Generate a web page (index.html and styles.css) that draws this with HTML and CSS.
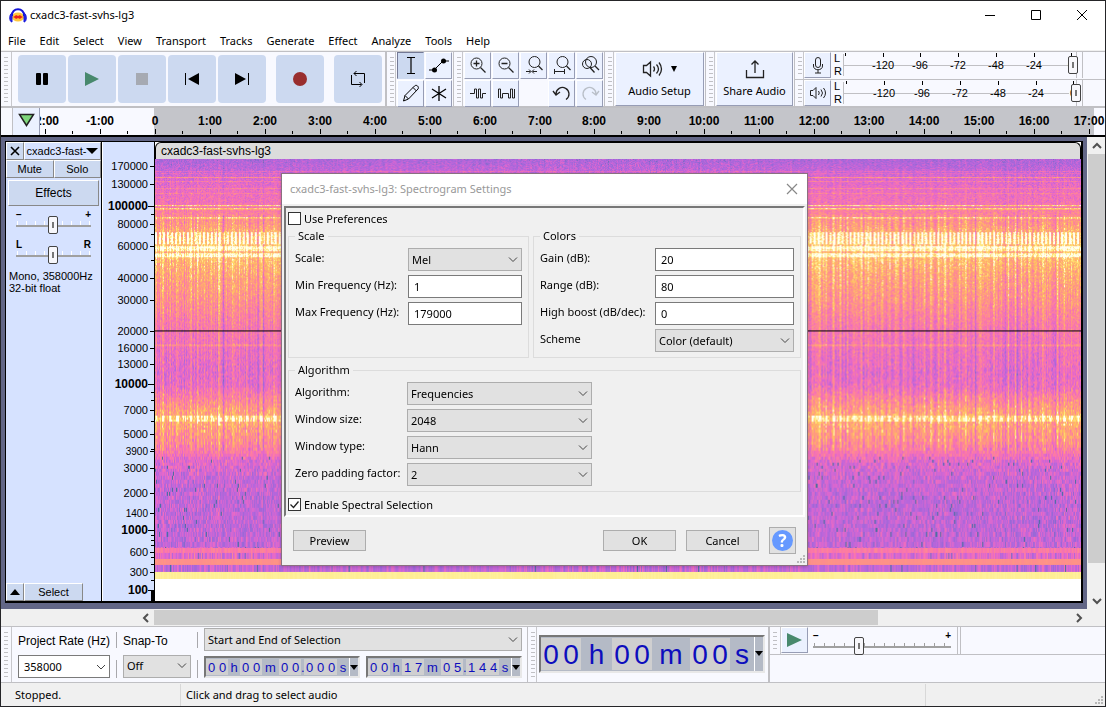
FILE: index.html
```html
<!DOCTYPE html>
<html lang="en">
<head>
<meta charset="utf-8">
<title>cxadc3-fast-svhs-lg3</title>
<link rel="stylesheet" href="styles.css">
</head>
<body>
<div class="window">
  <header class="titlebar">
    <svg class="logo" width="18" height="16" viewBox="0 0 18 16"><ellipse cx="9" cy="10" rx="6" ry="4.500" fill="#ffc53a"/><path d="M4 10l2-1 1-1 2 1 2-1 1 1 2 1-2 1-1 1-2-1-2 1-1-1z" fill="#e8201c"/><path d="M3 9C2 0 16 0 15 9" fill="none" stroke="#1414d8" stroke-width="2"/><path d="M3 6v9C0 15 0 7 3 6zM15 6v9c3 0 3-8 0-9z" fill="#2626e8" stroke="#1414d8"/></svg>
    <h1 class="title">cxadc3-fast-svhs-lg3</h1>
    <div class="winbtns">
      <button aria-label="Minimize"><svg width="12" height="12"><path d="M1 6.500h10" stroke="#000"/></svg></button>
      <button aria-label="Maximize"><svg width="12" height="12"><path d="M1.500 1.500h9v9h-9z" fill="none" stroke="#000"/></svg></button>
      <button aria-label="Close"><svg width="12" height="12"><path d="M1 1l10 10M11 1L1 11" stroke="#000"/></svg></button>
    </div>
  </header>
  <nav class="menubar"><button>File</button><button>Edit</button><button>Select</button><button>View</button><button>Transport</button><button>Tracks</button><button>Generate</button><button>Effect</button><button>Analyze</button><button>Tools</button><button>Help</button></nav>

  <div class="toolbars">
    <div class="dock transport">
      <i class="grip"></i>
      <div class="tbtns">
        <button aria-label="Pause"><svg width="24" height="24"><rect x="6" y="6" width="5" height="12" rx="1"/><rect x="13" y="6" width="5" height="12" rx="1"/></svg></button>
        <button aria-label="Play"><svg width="24" height="24"><path d="M5 5l14 7-14 7z" fill="#48896d"/></svg></button>
        <button aria-label="Stop"><svg width="24" height="24"><path d="M6 6h12v12H6z" fill="#a6aab2"/></svg></button>
        <button aria-label="Skip to start"><svg width="24" height="24"><path d="M5.500 6v12" stroke="#000"/><path d="M19 6v12L8 12z"/></svg></button>
        <button aria-label="Skip to end"><svg width="24" height="24"><path d="M18.500 6v12" stroke="#000"/><path d="M5 6v12l11-6z"/></svg></button>
        <button class="rec" aria-label="Record"><svg width="24" height="24"><circle cx="12" cy="12" r="7" fill="#992e2e"/></svg></button>
        <button class="loop" aria-label="Loop"><svg width="24" height="24" fill="none" stroke="#000"><path d="M5.500 8v9.500h10M8 6.500h10.500V16M10.500 4L8 6.500 10.500 9M13.500 15l2.500 2.500-2.500 2.500"/></svg></button>
      </div>
    </div>
    <div class="dock">
      <i class="grip"></i>
      <div class="tools two">
        <button class="on" aria-label="Selection tool"><svg width="24" height="24" fill="none" stroke="#000"><path d="M8 4.500h8M8 20.500h8M12 5v15" stroke-width="1.200"/></svg></button>
        <button aria-label="Envelope tool"><svg width="24" height="24"><path d="M2 17h5l9-9h6" fill="none" stroke="#000"/><circle cx="7.500" cy="17" r="2.500"/><circle cx="16.500" cy="8" r="2.500"/></svg></button>
        <button aria-label="Draw tool"><svg width="24" height="24" fill="none" stroke="#000"><path d="M4.500 20l1.500-5.500L15.500 5c2-2 5 1 3.500 3L9.500 18zM14 6.500l3.500 3.500M6 14.500l3.500 3.500"/></svg></button>
        <button aria-label="Multi-tool"><svg width="24" height="24" stroke="#000"><path d="M12 5v15M5 8l14 9M19 8L5 17" stroke-width="1.300"/></svg></button>
      </div>
    </div>
    <div class="dock">
      <i class="grip"></i>
      <div class="tools five">
        <button aria-label="Zoom in"><svg width="24" height="24" fill="none" stroke="#222"><circle cx="10.500" cy="10.500" r="5.500"/><path d="M14.500 14.500l5 5M10.500 7.500v6M7.500 10.500h6" stroke-width="1.300"/></svg></button>
        <button aria-label="Zoom out"><svg width="24" height="24" fill="none" stroke="#222"><circle cx="10.500" cy="10.500" r="5.500"/><path d="M14.500 14.500l5 5M7.500 10.500h6" stroke-width="1.300"/></svg></button>
        <button aria-label="Fit selection to width"><svg width="24" height="24" fill="none" stroke="#222"><circle cx="12.500" cy="9" r="5.500"/><path d="M16.500 13l4 4" stroke-width="1.300"/><path d="M4 18.500h4.500M10.500 18.500H15M7 16.500l2 2-2 2M12 16.500l-2 2 2 2"/></svg></button>
        <button aria-label="Fit project to width"><svg width="24" height="24" fill="none" stroke="#222"><circle cx="12.500" cy="9" r="5.500"/><path d="M16.500 13l4 4" stroke-width="1.300"/><path d="M4.500 18.500h10M4.500 16v5M14.500 16v5"/></svg></button>
        <button aria-label="Zoom toggle"><svg width="24" height="24" fill="none" stroke="#222"><circle cx="13" cy="9" r="5.500"/><circle cx="9" cy="11" r="4.500"/><path d="M17 13l4 4M12 14.500l4.500 5" stroke-width="1.300"/></svg></button>
        <button aria-label="Trim audio"><svg width="24" height="24" fill="none" stroke="#222"><path d="M4 12.500h4.500v-4.500h2v9h2v-9h2v9h2v-4.500H20"/></svg></button>
        <button aria-label="Silence audio"><svg width="24" height="24" fill="none" stroke="#222"><path d="M4.500 17V8h2v9h2v-4.500h6V17h2V8h2v9h2V8"/></svg></button>
        <span></span>
        <button aria-label="Undo"><svg width="24" height="24" fill="none" stroke="#222" stroke-width="1.300"><path d="M6 13a6.500 6.500 0 1 1 10 5.500M3 10l3 4 4-3"/></svg></button>
        <button aria-label="Redo" disabled><svg width="24" height="24" fill="none" stroke="#b9bfc8" stroke-width="1.300"><path d="M18 13a6.500 6.500 0 1 0-10 5.500M21 10l-3 4-4-3"/></svg></button>
      </div>
    </div>
    <div class="dock">
      <i class="grip"></i>
      <button class="big setup"><span class="icons"><svg width="22" height="20" fill="none" stroke="#222" stroke-width="1.300"><path d="M1.500 6.500h3l4-3.500v14l-4-3.500h-3zM11.500 7.500q2 2.500 0 5M14.500 5.500q4 4.500 0 9M17 3.500q5 6.500 0 13"/></svg><svg width="6" height="6"><path d="M0 0h6L3 6z"/></svg></span>Audio Setup</button>
    </div>
    <div class="dock">
      <i class="grip"></i>
      <button class="big share"><svg width="20" height="20" fill="none" stroke="#222" stroke-width="1.300"><path d="M1.500 11v7.500h17V11M10 14V2M6.500 5.500L10 2l3.500 3.500"/></svg>Share Audio</button>
    </div>
    <div class="meters">
      <div class="meter">
        <i class="grip"></i>
        <button class="mbtn" aria-label="Record meter"><svg width="24" height="24" fill="none" stroke="#222"><rect x="9.500" y="4.500" width="5" height="10" rx="2.500"/><path d="M7.500 11v2c0 5 9 5 9 0v-2M12 17v3M9 20h6"/></svg></button>
        <span class="lr"><b>L</b><b>R</b></span>
        <div class="scale"><svg class="mscale" data-x="0" height="26"></svg><input type="range" class="vslider" aria-label="Recording level" value="98"></div>
      </div>
      <div class="meter">
        <i class="grip"></i>
        <button class="mbtn" aria-label="Playback meter"><svg width="24" height="24" fill="none" stroke="#222"><path d="M4.500 9.500h2.500l3-3v11l-3-3H4.500zM12.500 10q1.500 2 0 4M15 8.500q3 3.500 0 7M17.500 7q4 5 0 10"/></svg></button>
        <span class="lr"><b>L</b><b>R</b></span>
        <div class="scale"><svg class="mscale" data-x="1" height="26"></svg><input type="range" class="vslider" aria-label="Playback level" value="99"></div>
      </div>
    </div>
  </div>

  <div class="timeline">
    <button class="pin" aria-label="Timeline options"><svg width="18" height="14"><path d="M1.500 1.500h14L8.500 12.500z" fill="#7ed67b" stroke="#222" stroke-width="1.500"/></svg></button>
    <div class="ruler"><svg id="time" height="26"></svg></div>
  </div>

  <main class="project">
    <div class="tracks">
      <section class="track">
        <aside class="panel">
          <div class="prow"><button class="close" aria-label="Close track"><svg width="10" height="10"><path d="M1 1l8 8M9 1L1 9" stroke="#000" stroke-width="1.600"/></svg></button><button class="name">cxadc3-fast-<svg width="12" height="7"><path d="M0 0h12L6 6z"/></svg></button></div>
          <div class="prow half"><button>Mute</button><button>Solo</button></div>
          <button class="effects">Effects</button>
          <label class="gain"><span>−</span><span>+</span><input type="range" aria-label="Gain" value="49"></label>
          <label class="gain pan"><span>L</span><span>R</span><input type="range" aria-label="Pan" value="49"></label>
          <p class="info">Mono, 358000Hz<br>32-bit float</p>
          <div class="pfoot"><button class="fold" aria-label="Collapse"><svg width="10" height="6"><path d="M0 6h10L5 0z"/></svg></button><button class="sel">Select</button></div>
        </aside>
        <div class="freq"><svg id="freq" width="51" height="460"></svg></div>
        <div class="clip"><div class="cliphead">cxadc3-fast-svhs-lg3</div><canvas id="spec" width="928" height="441"></canvas></div>
      </section>
    </div>
    <div class="vbar"><button aria-label="Scroll up"><svg width="10" height="8"><path d="M1 6l4-4 4 4" fill="none" stroke="#505050" stroke-width="2"/></svg></button><i></i><button aria-label="Scroll down"><svg width="10" height="8"><path d="M1 2l4 4 4-4" fill="none" stroke="#505050" stroke-width="2"/></svg></button></div>
  </main>
  <div class="hbar"><button aria-label="Scroll left"><svg width="8" height="10"><path d="M6 1L2 5l4 4" fill="none" stroke="#505050" stroke-width="2"/></svg></button><div class="lane"><i></i></div><button aria-label="Scroll right"><svg width="8" height="10"><path d="M2 1l4 4-4 4" fill="none" stroke="#505050" stroke-width="2"/></svg></button></div>

  <div class="bottom">
    <div class="dock selbar">
      <i class="grip"></i>
      <div class="field rate"><label for="rate">Project Rate (Hz)</label><span class="combo"><input id="rate" value="358000"><svg width="10" height="6"><path d="M1 1l4 4 4-4" fill="none" stroke="#444"/></svg></span></div>
      <i class="rule"></i>
      <div class="field snap"><label for="snap">Snap-To</label><select id="snap"><option>Off</option></select></div>
      <i class="rule"></i>
      <div class="range">
        <select aria-label="Selection mode"><option>Start and End of Selection</option></select>
        <div class="times">
          <div class="time"><span class="d">0</span><span class="d">0</span><span class="h">h</span><span class="d">0</span><span class="d">0</span><span class="m">m</span><span class="d">0</span><span class="d">0</span><span class="p">.</span><span class="d">0</span><span class="d">0</span><span class="d">0</span><span class="s">s</span><button aria-label="Format"><svg width="8" height="5"><path d="M0 0h8L4 5z"/></svg></button></div>
          <div class="time"><span class="d">0</span><span class="d">0</span><span class="h">h</span><span class="d">1</span><span class="d">7</span><span class="m">m</span><span class="d">0</span><span class="d">5</span><span class="p">.</span><span class="d">1</span><span class="d">4</span><span class="d">4</span><span class="s">s</span><button aria-label="Format"><svg width="8" height="5"><path d="M0 0h8L4 5z"/></svg></button></div>
        </div>
      </div>
    </div>
    <div class="dock timebar">
      <i class="grip"></i>
      <div class="time large"><span class="d">0</span><span class="d">0</span><span class="h">h</span><span class="d">0</span><span class="d">0</span><span class="m">m</span><span class="d">0</span><span class="d">0</span><span class="s">s</span><button aria-label="Format"><svg width="8" height="5"><path d="M0 0h8L4 5z"/></svg></button></div>
    </div>
    <div class="rest">
      <div class="speed">
        <i class="grip"></i>
        <button class="mbtn" aria-label="Play at speed"><svg width="24" height="24"><path d="M4 5l15 7-15 7z" fill="#48896d"/></svg></button>
        <label class="gain"><span>−</span><span>+</span><input type="range" aria-label="Playback speed" value="32"></label>
        <i class="edge"></i>
      </div>
    </div>
  </div>
  <footer class="status"><span class="st1">Stopped.</span><span class="st2">Click and drag to select audio</span><span class="st3"><svg class="sizer" width="10" height="10" fill="#b8b8b8"><path d="M6 0h2v2H6zM3 3h2v2H3zM6 3h2v2H6zM0 6h2v2H0zM3 6h2v2H3zM6 6h2v2H6z"/></svg></span></footer>

  <form class="dialog" role="dialog" aria-label="Spectrogram Settings">
    <header class="dtitle"><h2>cxadc3-fast-svhs-lg3: Spectrogram Settings</h2><button type="button" aria-label="Close"><svg width="12" height="12"><path d="M1 1l10 10M11 1L1 11" stroke="#888" stroke-width="1.200"/></svg></button></header>
    <div class="dpanel">
      <label class="check"><input type="checkbox">Use Preferences</label>
      <div class="groups">
        <fieldset class="g-scale"><legend>Scale</legend>
          <label for="scale">Scale:</label><select id="scale"><option>Mel</option></select>
          <label for="minf">Min Frequency (Hz):</label><input id="minf" value="1">
          <label for="maxf">Max Frequency (Hz):</label><input id="maxf" value="179000">
        </fieldset>
        <fieldset class="g-colors"><legend>Colors</legend>
          <label for="cgain">Gain (dB):</label><input id="cgain" value="20">
          <label for="crange">Range (dB):</label><input id="crange" value="80">
          <label for="boost">High boost (dB/dec):</label><input id="boost" value="0">
          <label for="scheme">Scheme</label><select id="scheme"><option>Color (default)</option></select>
        </fieldset>
        <fieldset class="g-algo"><legend>Algorithm</legend>
          <label for="algo">Algorithm:</label><select id="algo"><option>Frequencies</option></select>
          <label for="wsize">Window size:</label><select id="wsize"><option>2048</option></select>
          <label for="wtype">Window type:</label><select id="wtype"><option>Hann</option></select>
          <label for="zpad">Zero padding factor:</label><select id="zpad"><option>2</option></select>
        </fieldset>
      </div>
      <label class="check spectral"><input type="checkbox" checked>Enable Spectral Selection</label>
    </div>
    <div class="dbtns"><button type="button">Preview</button><span class="grow"></span><button type="button">OK</button><button type="button">Cancel</button><button type="button" class="help" aria-label="Help"><span>?</span></button></div>
    <svg class="sizer" width="10" height="10" fill="#b8b8b8"><path d="M6 0h2v2H6zM3 3h2v2H3zM6 3h2v2H6zM0 6h2v2H0zM3 6h2v2H3zM6 6h2v2H6z"/></svg>
  </form>
</div>
<script src="app.js"></script>
</body>
</html>
```

FILE: styles.css
```css
* { box-sizing: border-box; }
body { margin: 0; font: 11px/16px "Noto Sans", "Open Sans", sans-serif; color: #000; }
button, input, select { font: inherit; color: inherit; margin: 0; }
button { border: 0; padding: 0; background: none; display: flex; align-items: center; justify-content: center; }
svg { display: block; flex: none; }
h1, h2, p { margin: 0; font: inherit; }

.window { position: relative; display: flex; flex-direction: column; height: 100vh; min-width: 1000px; border: 1px solid #252528; background: #f0f0f0; overflow: hidden; }
.titlebar { display: flex; align-items: center; height: 29px; background: #fff; padding: 0 0 1px 8px; }
.title { margin-left: 3px; flex: 1; }
.winbtns { display: flex; }
.winbtns button { width: 46px; height: 28px; }
.menubar { display: flex; height: 20px; background: #fff; padding: 1px 0 0 7px; gap: 14px; }
.menubar button { height: 20px; }

.toolbars { display: flex; height: 57px; margin-top: 1px; border-top: 1px solid #c0c0c4; border-bottom: 2px solid #c0c0c4; background: #f8f9ff; }
.dock { display: flex; align-items: center; border-right: 1px solid #c0c0c4; }
.transport { border-right-width: 2px; }
.grip { width: 9px; align-self: stretch; flex: none; border-right: 1px solid #c8c8cc; background: repeating-linear-gradient(#c0c0c4 0 1px, transparent 1px 4px) 3px 5px / 4px 46px no-repeat; }
.transport .grip, .selbar .grip, .speed .grip { width: 11px; }
.tbtns { display: flex; gap: 2px; padding: 0 3px 0 6px; }
.tbtns button { width: 48px; height: 48px; border-radius: 4px; background: #ccd9f0; }
.tbtns .rec { margin-left: 8px; }
.tbtns .loop { margin-left: 8px; }
.tools { display: grid; gap: 1px; padding: 0 1px; align-content: center; }
.two { grid-template-columns: repeat(2, 27px); }
.five { grid-template-columns: repeat(5, 27px); }
.tools button, .mbtn, .big { height: 27px; background: #ebf1ff; border: 1px solid #fff; border-right-color: #979db5; border-bottom-color: #979db5; }
.tools .on { background: #ccd9f0; border-color: #737995 #ccd9f0 #ccd9f0 #737995; }
.big { flex-direction: column; height: 54px; gap: 4px; margin: 0 1px; }
.setup { width: 89px; }
.setup .icons { display: flex; align-items: center; gap: 7px; }
.share { width: 77px; }
.meters { flex: 1; display: flex; flex-direction: column; }
.meter { display: flex; flex: 1; align-items: center; }
.meter + .meter { border-top: 1px solid #c0c0c4; }
.meter .grip, .speed .grip { background-size: 4px 17px; }
.mbtn { width: 27px; height: 26px; flex: none; }
.lr { width: 12px; padding-left: 3px; font: 11px/13px "Liberation Sans", sans-serif; }
.lr b { display: block; font-weight: 400; }
.scale { position: relative; width: 240px; overflow: hidden; border-right: 1px solid #c0c0c4; }
.mscale { width: 100%; font: 11px "Liberation Sans", sans-serif; }
.vslider { position: absolute; left: 0; top: 4px; width: 240px; }

input[type=range] { appearance: none; height: 18px; background: transparent; }
input[type=range]::-webkit-slider-thumb { appearance: none; width: 10px; height: 18px; border: 1px solid #444; border-radius: 2px; background: linear-gradient(#777, #777) center / 2px 6px no-repeat #f7f7fb; }

.timeline { display: flex; height: 29px; background: #f8f9ff; border-bottom: 2px solid #000; }
.pin { width: 28px; margin-left: 11px; height: 27px; background: #ebf1ff; border-right: 1px solid #979db5; border-left: 1px solid #c0c0c4; align-items: flex-start; padding: 5px 0 0 2px; }
.ruler { flex: 1; margin: 0 11px 0 0; overflow: visible; background: linear-gradient(#c4c5ca, #c4c5ca) 114px 0 no-repeat #f8f9ff; }
#time { width: 100%; overflow: visible; font: bold 12px "Liberation Sans", sans-serif; clip-path: inset(0 -11px 0 0); }

.project { flex: 1; min-height: 0; display: flex; }
.tracks { flex: 1; min-width: 0; background: #626686; padding: 4px 4px 6px 4px; display: flex; }
.track { flex: 1; min-width: 0; display: flex; border: 1px solid #000; border-width: 1px 2px 2px 1px; background: #d6e2ff; font: 11px/14px "Liberation Sans", sans-serif; }
.panel { width: 96px; flex: none; display: flex; flex-direction: column; border-right: 1px solid #000; }
.panel button { background: #ccd9f0; border: 1px solid #fff; border-right-color: #888; border-bottom-color: #888; }
.prow { display: flex; height: 18px; }
.prow .close { width: 18px; }
.prow .name { flex: 1; overflow: hidden; background: #d6e2ff; }
.half button { flex: 1; }
.panel .effects { height: 26px; margin: 2px 2px 4px 2px; font-size: 12px; }
.gain { display: grid; grid-template-columns: 1fr 1fr; grid-template-rows: 10px 18px; margin: 0 10px; height: 30px; font: bold 10px/10px "Liberation Sans", sans-serif; }
.gain span:nth-child(2) { text-align: right; }
.gain input { grid-column: 1 / 3; width: 100%; height: 18px; margin-top: -4px; background: linear-gradient(#a0a0a0, #a0a0a0) 0 9px / 100% 2px no-repeat, repeating-linear-gradient(90deg, #fff 0 1px, transparent 1px 9px) 1px 5px / 100% 4px no-repeat; }
.info { padding: 0 3px; line-height: 12px; white-space: nowrap; }
.pfoot { display: flex; height: 18px; margin-top: auto; }
.pfoot .fold { width: 18px; }
.pfoot .sel { width: 59px; }
.freq { width: 53px; flex: none; border-left: 1px solid #fff; border-right: 1px solid #000; overflow: hidden; }
#freq { font: 11px "Liberation Sans", sans-serif; }
.clip { flex: 1; min-width: 0; display: flex; flex-direction: column; background: #fff; }
.cliphead { height: 17px; flex: none; background: #dcdcdc; border: 1px solid #000; border-bottom: 0; border-radius: 6px 6px 0 0; padding-left: 5px; font-size: 12px; line-height: 17px; }
#spec { width: 100%; flex: 1; min-height: 0; display: block; }

.vbar { width: 18px; flex: none; display: flex; flex-direction: column; padding-left: 1px; }
.vbar button { height: 17px; }
.vbar i { flex: 1; background: #cdcdcd; margin-bottom: 29px; }
.hbar { display: flex; height: 17px; flex: none; padding: 1px 18px 1px 136px; }
.hbar button { width: 17px; }
.lane { flex: 1; display: flex; }
.lane i { width: 79%; background: #cdcdcd; }

.bottom { display: flex; height: 57px; flex: none; border-top: 1px solid #c0c0c4; border-bottom: 1px solid #c0c0c4; background: #f8f9ff; }
.selbar { gap: 6px; padding-right: 5px; }
.field { display: flex; flex-direction: column; gap: 5px; font: 12px/18px "Liberation Sans", sans-serif; white-space: nowrap; }
.rate { width: 92px; }
.snap { width: 68px; }
.combo { position: relative; display: block; }
.combo svg { position: absolute; right: 4px; top: 9px; }
.field select, .field input { font: 11px/16px "Noto Sans", "Open Sans", sans-serif; }
input:not([type]), select { width: 100%; height: 23px; border: 1px solid #7a7a7a; background: #fff; border-radius: 0; padding: 0 5px; outline: 0; min-width: 0; }
select { appearance: none; border-color: #adadad; padding: 0 3px; background: #e1e1e1 url("data:image/svg+xml,%3Csvg xmlns='http://www.w3.org/2000/svg' width='10' height='6'%3E%3Cpath d='M1 .5l4 4 4-4' fill='none' stroke='%23444'/%3E%3C/svg%3E") right 3px center no-repeat; }
.rule { width: 1px; height: 46px; background: linear-gradient(#a8a8ac 0 16px, transparent 16px 28px, #a8a8ac 28px); }
.range { width: 318px; display: flex; flex-direction: column; gap: 5px; padding-bottom: 3px; }
.times { display: flex; justify-content: space-between; }
.time { display: flex; height: 22px; padding: 1px 0; border: 2px solid #777; border-right-color: #e8e8e8; border-bottom-color: #e8e8e8; background: #b4bac6; color: #0d0dbd; font: 13px/17px "Liberation Sans", sans-serif; }
.time span { text-align: center; }
.time .d { width: 11px; background: #cfcfd0; }
.time .h { width: 12px; }
.time .m { width: 17px; }
.time .p { width: 3px; }
.time .s { width: 12px; }
.time button { width: 9px; margin: -1px 0; border-left: 1px solid #fff; }
.times .time { width: 156px; overflow: hidden; }
.large { width: 226px; height: 38px; margin: 0 3px 2px 2px; font-size: 28px; line-height: 34px; }
.large .d { width: 20px; }
.large .h { width: 31px; }
.large .m { width: 38px; }
.large .s { width: 24px; }
.timebar { border-right-width: 2px; }
.rest { flex: 1; min-width: 0; }
.speed { display: flex; height: 28px; border-bottom: 1px solid #c0c0c4; }
.speed .gain { width: 138px; margin: 4px 6px 0 5px; height: 24px; }
.speed .gain input { background: linear-gradient(#a0a0a0, #a0a0a0) 0 9px / 100% 2px no-repeat, repeating-linear-gradient(90deg, #a0a0a0 0 1px, transparent 1px 10px) 1px 6px / 100% 3px no-repeat; }
.edge { width: 4px; border: solid #c0c0c4; border-width: 0 1px; }

.status { display: flex; height: 23px; flex: none; line-height: 22px; padding-top: 1px; }
.st1 { width: 180px; padding-left: 14px; border-right: 1px solid #d8d8d8; }
.st2 { flex: 1; padding-left: 5px; border-right: 1px solid #d8d8d8; }
.st3 { width: 179px; }
.sizer { position: absolute; right: 0; bottom: 0; }

.dialog { position: absolute; left: 280px; top: 172px; width: 527px; border: 1px solid #8a7080; background: #f0f0f0; box-shadow: 0 1px 3px rgba(0, 0, 0, .2); padding-bottom: 11px; }
.dtitle { display: flex; align-items: center; justify-content: space-between; height: 30px; background: #fff; padding: 0 9px 0 8px; color: #999; }
.dpanel { margin: 2px 2px 10px; border: 2px solid #777; border-right-color: #fff; border-bottom-color: #fff; padding: 1px 2px 1px 2px; }
.check { display: flex; align-items: center; gap: 3px; height: 19px; }
.spectral { margin-top: 3px; }
.check input { appearance: none; width: 13px; height: 13px; border: 1px solid #333; background: #fff; }
.check input:checked { background: #fff url("data:image/svg+xml,%3Csvg xmlns='http://www.w3.org/2000/svg' width='11' height='11'%3E%3Cpath d='M1.500 5.500l3 3 5-6' fill='none' stroke='%23222' stroke-width='1.300'/%3E%3C/svg%3E") center no-repeat; }
.groups { display: grid; grid-template-columns: 241px 1fr; gap: 4px; }
fieldset { margin: 0; min-width: 0; border: 1px solid #dcdcdc; padding: 4px 6px 0; display: grid; grid-auto-rows: 23px; row-gap: 4px; line-height: 20px; height: 130px; align-content: start; white-space: nowrap; }
legend { padding: 0 3px; line-height: 16px; }
.g-scale { grid-template-columns: 113px 1fr; }
.g-colors { grid-template-columns: 115px 1fr; }
.g-algo { grid-column: 1 / 3; grid-template-columns: 112px 185px; }
.dbtns { display: flex; align-items: center; gap: 10px; padding: 0 11px; }
.dbtns button { width: 73px; height: 21px; border: 1px solid #adadad; background: #e1e1e1; }
.dbtns .help { width: 27px; height: 27px; }
.help span { width: 21px; height: 21px; border-radius: 50%; background: #6699ff; color: #fff; font: bold 17px/21px "Open Sans", sans-serif; }
.grow { flex: 1; }
```

FILE: app.js
```js
const NS = "http://www.w3.org/2000/svg";
function add(svg, tag, attrs, text) {
  const el = document.createElementNS(NS, tag);
  for (const k in attrs) el.setAttribute(k, attrs[k]);
  if (text !== undefined) el.textContent = text;
  svg.appendChild(el);
}
function tick(svg, x, y, w, h) { add(svg, "rect", { x, y, width: w, height: h }); }

// Timeline: one label per minute, a short tick on each half minute
const time = document.getElementById("time");
for (let m = -2; m <= 17; m++) {
  const x = Math.round(115 + m * 54.93);
  const label = m === 0 ? "0" : m + ":00";
  add(time, "text", { x, y: 17, "text-anchor": "middle" }, label);
  tick(time, x, 21, 1, 5);
  if (m < 17) tick(time, x + 27, 23, 1, 3);
}

// Level meters
for (const svg of document.querySelectorAll(".mscale")) {
  const dx = Number(svg.dataset.x);
  add(svg, "rect", { x: 0, y: 13, width: 226, height: 1, fill: "#c0c0c4" });
  add(svg, "rect", { x: 0, y: 2, width: 1, height: 22, fill: "#c0c0c4" });
  add(svg, "rect", { x: 233, y: 0, width: 1, height: 26, fill: "#c0c0c4" });
  ["", "-120", "-96", "-72", "-48", "-24", "0"].forEach((t, i) => {
    const x = Math.round(2 + i * (37.7 + dx * 0.2)) + dx;
    tick(svg, x, 1, 1, i ? 4 : 3);
    add(svg, "text", { x, y: 17, "text-anchor": "middle" }, t);
  });
}

// Frequency scale: [label, y, kind]
const freq = document.getElementById("freq");
[["170000", 24], ["130000", 42], ["100000", 64, "b"], ["80000", 82], ["60000", 104], ["40000", 136], ["30000", 158],
 ["20000", 189], ["16000", 206], ["13000", 222], ["10000", 242, "b"], ["7000", 268], ["5000", 292], ["3900", 309, "s"],
 ["3000", 326], ["2000", 351], ["1400", 371, "s"], ["1000", 388, "b"], ["600", 410], ["300", 430], ["100", 448, "b"]
].forEach(([t, y, k]) => {
  add(freq, "text", { x: 45, y: y + 4, "text-anchor": "end", "font-size": k === "b" ? 12 : k === "s" ? 10 : 11, "font-weight": k === "b" ? "bold" : "normal" }, t);
  tick(freq, k === "b" ? 45 : 47, y, k === "b" ? 6 : 4, 1);
});
[72, 92, 118, 250, 258, 279, 307, 393, 398, 403, 415, 422, 438].forEach(y => tick(freq, 48, y, 3, 1));
tick(freq, 48, 448, 3, 11);

// Spectrogram
const W = 928, H = 441;
const ctx = document.getElementById("spec").getContext("2d");
const img = ctx.createImageData(W, H);
let seed = 7;
function rnd() { seed = (seed * 1664525 + 1013904223) >>> 0; return seed / 4294967296; }
const palette = [[0, 50, 90, 110], [.12, 80, 110, 160], [.25, 150, 105, 215], [.38, 185, 102, 220], [.5, 228, 104, 204],
  [.62, 253, 120, 168], [.74, 255, 155, 125], [.85, 255, 195, 95], [.93, 255, 240, 130], [1, 255, 255, 240]];
const profile = [[0, .34], [10, .4], [18, .48], [30, .54], [45, .58], [56, .67], [68, .75], [75, .82], [84, .85], [89, .86], [90, .8],
  [96, .84], [104, .82], [115, .77], [140, .71], [171, .6], [190, .56], [212, .52], [226, .54], [236, .64], [250, .75],
  [258, .8], [268, .75], [280, .69], [290, .62], [300, .5], [315, .43], [345, .4], [385, .41], [441, .41]];
function lerp(table, v) {
  let i = 1;
  while (i < table.length - 1 && table[i][0] < v) i++;
  const a = table[i - 1], b = table[i];
  const t = Math.min(1, Math.max(0, (v - a[0]) / (b[0] - a[0])));
  return a.slice(1).map((n, k) => n + (b[k + 1] - n) * t);
}
const columns = [];
for (let x = 0; x < W; x++) {
  columns.push((rnd() - .5) * .16 + (x % 7 < 2 ? .07 : -.02) + (rnd() < .05 ? -.14 : 0));
}
const lines = { 12: .1, 14: .08, 18: .22, 22: .12, 29: .12, 34: .1, 46: .3, 49: .26, 50: .12, 58: .2, 59: .1, 185: .13, 186: .1 };
let y = 0;
while (y < 412) {
  let h = y < 200 ? 1 : y < 270 ? 2 : y < 310 ? 3 : y < 370 ? 4 : 5;
  if (y >= 388) h = y === 388 ? 5 : y === 393 ? 6 : y === 399 ? 6 : 7;
  else h = Math.min(h, 388 - y);
  for (let x = 0; x < W; x++) {
    let v = lerp(profile, y)[0];
    const stripes = y > 55 && y < 290 ? 1 : .35;
    v += columns[x] * stripes + (rnd() + rnd() - 1) * (y > 295 ? .18 : .14);
    if (y > 295 && rnd() < .018) v = .12;
    if (lines[y]) v += lines[y];
    if (y >= 73 && y < 85 && x % 4 < 2) v += .25;
    if ((y >= 87 && y < 92) || (y >= 94 && y < 98)) v += .16;
    if (y >= 256 && y < 261) v += x % 7 < 3 ? .18 : .09;
    if (y === 388) v = .56 + rnd() * .12;
    if (y === 393) v += .08;
    if (y === 399) v = .69 + rnd() * .03;
    const c = lerp(palette, v);
    for (let k = 0; k < h; k++) {
      const p = ((y + k) * W + x) * 4;
      img.data[p] = c[0]; img.data[p + 1] = c[1]; img.data[p + 2] = c[2]; img.data[p + 3] = 255;
    }
  }
  y += h;
}
ctx.putImageData(img, 0, 0);
for (let x = 0; x < W; x++) {
  ctx.fillStyle = rnd() < .5 ? "#fff09c" : "#ffee94";
  ctx.fillRect(x, 412, 1, 7);
}
ctx.fillStyle = "#fff";
ctx.fillRect(0, 419, W, 22);
ctx.fillStyle = "#000";
ctx.fillRect(0, 171, W, 1);
```
